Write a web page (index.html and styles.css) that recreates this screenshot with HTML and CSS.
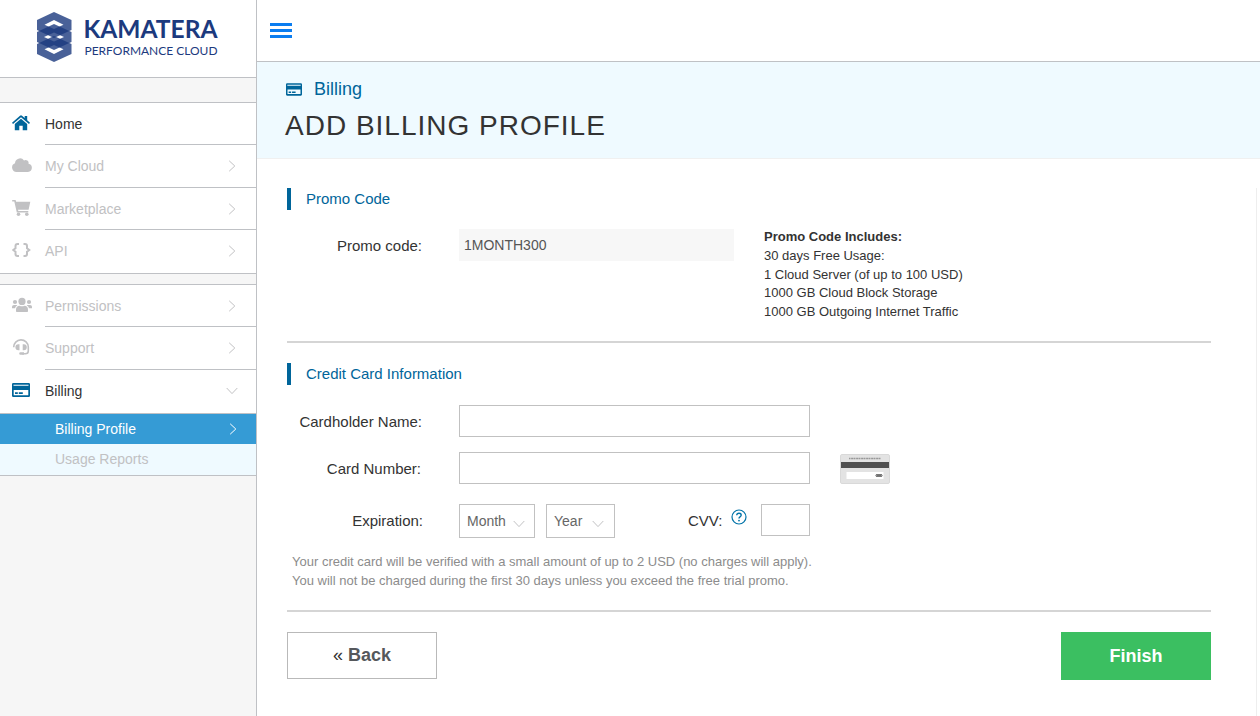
FILE: index.html
```html
<!DOCTYPE html>
<html lang="en">
<head>
    <meta charset="UTF-8">
    <meta name="viewport" content="width=device-width, initial-scale=1.0">
    <title>Kamatera - Add Billing Profile</title>
    <link rel="stylesheet" href="styles.css">
</head>
<body>
    <!-- shared icons -->
    <svg class="sprite">
        <symbol id="right" viewBox="0 0 8 12"><path d="M1.2 .8 6.8 6l-5.6 5.2" fill="none" stroke="currentColor"/></symbol>
        <symbol id="down" viewBox="0 0 12 8"><path d="M.7 1 6 6.6 11.3 1" fill="none" stroke="currentColor"/></symbol>
        <symbol id="card" viewBox="0 0 18 14">
            <path fill-rule="evenodd" fill="currentColor" d="M1.3 0h15.4A1.3 1.3 0 0 1 18 1.3v11.4a1.3 1.3 0 0 1-1.3 1.3H1.3A1.3 1.3 0 0 1 0 12.7V1.3A1.3 1.3 0 0 1 1.3 0zM1.5 1.7v1.1h15V1.7zM1.7 7v5.2h14.6V7zM3 9.3h2.8v1.7H3zM6.8 9.3h4v1.7h-4z"/>
        </symbol>
    </svg>

    <div class="app">
        <aside class="sidebar">
            <div class="logo">
                <svg width="184" height="52" viewBox="36 11 184 52">
                    <g fill="#1c3a7e" fill-opacity=".8" fill-rule="evenodd">
                        <path d="M54 12l17.5 8v10L54 38 37 30V20zM54 20l-9.5 4.7 9.5 4.3 9.5-4.3z"/>
                        <path d="M54 24l17.5 8v10L54 50 37 42V32zM54 32.5l-10 4.5 10 4.5 10-4.5z"/>
                        <path d="M54 36l17.5 8v10L54 62 37 54V44zM54 45l-9.5 4.3 9.5 4.7 9.5-4.7z"/>
                    </g>
                    <text class="logo-name" x="83.5" y="38" textLength="134" lengthAdjust="spacingAndGlyphs">KAMATERA</text>
                    <text class="logo-sub" x="84.5" y="55" textLength="133" lengthAdjust="spacingAndGlyphs">PERFORMANCE CLOUD</text>
                </svg>
            </div>

            <nav class="menu">
                <a class="item active">
                    <svg class="icon" viewBox="1 0 20 16"><path fill="currentColor" d="M9 .8a1.5 1.5 0 0 1 2 0l2.7 2.3V1h2.5v4.2L19 7.7l-1 1.2L10 2.3 2 8.9 1 7.7zM10 3.8l6.2 5.1v6.3h-4.5v-4.5H8.3v4.5H3.8V8.9z"/></svg>
                    <span class="label">Home</span>
                </a>
                <a class="item tall">
                    <svg class="icon" viewBox="0 0 20 16"><path fill="currentColor" d="M4.5 15A4.5 4.5 0 0 1 3 6.3 5 5 0 0 1 12 3.4a3 3 0 0 1 4.5 3.3A4.2 4.2 0 0 1 16 15z"/></svg>
                    <span class="label">My Cloud<svg class="right"><use href="#right"/></svg></span>
                </a>
                <a class="item">
                    <svg class="icon" viewBox="0 0 20 16"><path fill="currentColor" d="M.2 0h3.4l.5 1.7h14.2l-1.7 8H6l.3 1.3h10v1.5H4.8L2.3 1.6H.2z"/><circle cx="6.5" cy="14.2" r="1.8" fill="currentColor"/><circle cx="14.8" cy="14.2" r="1.8" fill="currentColor"/></svg>
                    <span class="label">Marketplace<svg class="right"><use href="#right"/></svg></span>
                </a>
                <a class="item last">
                    <svg class="icon" viewBox="0 0 20 16"><path fill="none" stroke="currentColor" stroke-width="2" d="M7 2H5.5Q3.5 2 3.5 4v2.2L1.2 8l2.3 1.8V12q0 2 2 2H7M11.5 2H13q2 0 2 2v2.2L17.3 8 15 9.8V12q0 2-2 2h-1.5"/></svg>
                    <span class="label">API<svg class="right"><use href="#right"/></svg></span>
                </a>
            </nav>

            <nav class="menu">
                <a class="item">
                    <svg class="icon" viewBox="0 0 20 16"><g fill="currentColor"><circle cx="10" cy="4.4" r="3.6"/><circle cx="3" cy="5" r="2.1"/><circle cx="17" cy="5" r="2.1"/><path d="M4 14.2v-1.5Q4 9 7.5 8.7q2.5 1 5 0Q16 9 16 12.7v1.5q0 .8-.8.8H4.8q-.8 0-.8-.8zM0 11v-1.2Q0 8 2 8h2.5l.8.6Q3.5 9.5 3 11.2H0zM20 11v-1.2Q20 8 18 8h-2.5l-.8.6q1.8.9 2.3 2.6h3z"/></g></svg>
                    <span class="label">Permissions<svg class="right"><use href="#right"/></svg></span>
                </a>
                <a class="item tall">
                    <svg class="icon" viewBox="0 0 20 16"><path fill="none" stroke="currentColor" stroke-width="1.6" d="M1.7 8.3A7.3 7.3 0 0 1 16.3 8v4q0 2.7-3 2.7H10"/><path fill="currentColor" d="M7.5 5.2v6H6.4a3 3 0 0 1 0-6zM10.7 5.2v6h1.1a3 3 0 0 0 0-6zM8.5 13.2H12v2.6H8.5a1.3 1.3 0 0 1 0-2.6z"/></svg>
                    <span class="label">Support<svg class="right"><use href="#right"/></svg></span>
                </a>
                <a class="item active last">
                    <svg class="icon card"><use href="#card"/></svg>
                    <span class="label">Billing<svg class="down"><use href="#down"/></svg></span>
                </a>
                <a class="sub-item selected">Billing Profile<svg class="right"><use href="#right"/></svg></a>
                <a class="sub-item">Usage Reports</a>
            </nav>
        </aside>

        <main class="main">
            <div class="topbar">
                <div class="burger"><i></i><i></i><i></i></div>
            </div>

            <header class="page-header">
                <div class="crumb"><svg preserveAspectRatio="none"><use href="#card"/></svg>Billing</div>
                <h1>ADD BILLING PROFILE</h1>
            </header>

            <div class="scroll-area">
                <form class="content">
                    <h2>Promo Code</h2>
                    <div class="row promo-row">
                        <label>Promo code:</label>
                        <div class="promo-value">1MONTH300</div>
                        <div class="promo-info">
                            <b>Promo Code Includes:</b><br>
                            30 days Free Usage:<br>
                            1 Cloud Server (of up to 100 USD)<br>
                            1000 GB Cloud Block Storage<br>
                            1000 GB Outgoing Internet Traffic
                        </div>
                    </div>
                    <hr>

                    <h2>Credit Card Information</h2>
                    <div class="row name-row">
                        <label>Cardholder Name:</label>
                        <input type="text" class="field">
                    </div>
                    <div class="row number-row">
                        <label>Card Number:</label>
                        <input type="text" class="field">
                        <svg class="card-back" width="50" height="30" viewBox="0 0 50 30">
                            <rect x=".5" y=".5" width="49" height="29" rx="1.5" fill="#e3e3e3" stroke="#d9d9d9"/>
                            <path d="M9 4.5h32" stroke="#999" stroke-width="1.4" stroke-dasharray="1.5 .6 2.5 .4"/>
                            <rect x="1" y="8" width="48" height="6" fill="#505050"/>
                            <rect x="6.5" y="18" width="37" height="7" fill="#fff"/>
                            <g fill="none" stroke="#444"><circle cx="37" cy="21.5" r="1"/><circle cx="39" cy="21.5" r="1"/><circle cx="41" cy="21.5" r="1"/></g>
                        </svg>
                    </div>
                    <div class="row exp-row">
                        <label>Expiration:</label>
                        <div class="select month">Month<svg><use href="#down"/></svg></div>
                        <div class="select year">Year<svg><use href="#down"/></svg></div>
                        <span class="cvv-label">CVV:</span>
                        <svg class="help" width="16" height="16" viewBox="0 0 16 16"><circle cx="8" cy="8" r="7" fill="none" stroke="currentColor" stroke-width="1.2"/><path d="M5.7 6.3Q5.9 4.3 8 4.3t2.2 1.8Q10.2 7.2 9 7.9 8 8.5 8 9.6" fill="none" stroke="currentColor" stroke-width="1.4"/><circle cx="8" cy="11.6" r=".9" fill="currentColor"/></svg>
                        <input type="text" class="field cvv">
                    </div>
                    <p class="note">
                        Your credit card will be verified with a small amount of up to 2 USD (no charges will apply).<br>
                        You will not be charged during the first 30 days unless you exceed the free trial promo.
                    </p>
                    <hr>

                    <div class="buttons">
                        <button type="button" class="back"><span>«</span> Back</button>
                        <button type="button" class="finish">Finish</button>
                    </div>
                </form>
            </div>
        </main>
    </div>
</body>
</html>
```
FILE: styles.css
```css
:root {
    --blue: #00659a;
    --line: #bfc1c5;
    --text: #333;
    --muted: #c1c1c3;
    --pale: #effaff;
}

* {
    box-sizing: border-box;
}

body {
    margin: 0;
    font-family: "Liberation Sans", Arial, sans-serif;
    color: var(--text);
    background: #fff;
    overflow: hidden;
}

.sprite {
    display: none;
}

.app {
    display: flex;
    height: 716px;
}

/* Sidebar */
.sidebar {
    width: 257px;
    flex-shrink: 0;
    background: #f6f6f6;
    border-right: 1px solid var(--line);
}

.logo {
    height: 78px;
    padding: 11px 0 0 36px;
    background: #fff;
    border-bottom: 1px solid var(--line);
    margin-bottom: 24px;
}

.logo svg {
    display: block;
    overflow: visible;
}

.logo-name {
    font: 700 25.5px Lato, sans-serif;
    fill: #1c3a7e;
}

.logo-sub {
    font: 400 12px Lato, sans-serif;
    fill: #1c3a7e;
}

.menu {
    background: #fff;
    border-top: 1px solid var(--line);
    border-bottom: 1px solid var(--line);
    margin-bottom: 10px;
    font-size: 14px;
}

.item {
    display: flex;
    align-items: flex-start;
    height: 42px;
    padding-left: 12px;
    color: var(--muted);
}

.item.tall,
.item.last {
    height: 43px;
}

.icon {
    width: 20px;
    height: 16px;
    margin: 12px 13px 0 0;
    flex-shrink: 0;
}

.icon.card {
    width: 18px;
    height: 14px;
    margin: 13px 15px 0 0;
}

.label {
    flex: 1;
    display: flex;
    justify-content: space-between;
    align-self: stretch;
    line-height: 42px;
    border-bottom: 1px solid var(--line);
    color: var(--muted);
}

.last .label {
    border-bottom: none;
}

.active {
    color: var(--blue);
}

.active .label {
    color: var(--text);
}

.right {
    width: 8px;
    height: 12px;
    margin: 15px 20px 0 0;
}

.label .down {
    width: 12px;
    height: 8px;
    margin: 17px 18px 0 0;
    color: var(--muted);
}

.sub-item {
    display: flex;
    justify-content: space-between;
    height: 31px;
    padding-left: 55px;
    line-height: 30px;
    background: var(--pale);
    color: var(--muted);
}

.sub-item.selected {
    background: #359bd5;
    border-top: 1px solid var(--line);
    color: #fff;
}

.sub-item .right {
    margin: 9px 19px 0 0;
}

/* Main column */
.main {
    flex: 1;
    display: flex;
    flex-direction: column;
}

.topbar {
    height: 62px;
    padding: 23px 13px;
    border-bottom: 1px solid var(--line);
}

.burger {
    display: flex;
    flex-direction: column;
    gap: 3px;
    width: 22px;
}

.burger i {
    height: 3px;
    background: #0b7df0;
}

.page-header {
    height: 97px;
    padding: 15px 28px 0;
    background: var(--pale);
    border-bottom: 1px solid #f0f0f0;
}

.crumb {
    display: flex;
    align-items: center;
    gap: 12px;
    height: 24px;
    padding-left: 1px;
    font-size: 18px;
    color: var(--blue);
}

.crumb svg {
    width: 16px;
    height: 13px;
}

h1 {
    margin: 8px 0 0;
    font-size: 28px;
    line-height: 34px;
    font-weight: normal;
    letter-spacing: 1px;
}

.scroll-area {
    flex: 1;
    margin: 29px 3px 0 0;
    border-right: 1px solid #eee;
}

.content {
    width: 954px;
    padding-left: 30px;
}

h2 {
    margin: 0;
    height: 22px;
    padding-left: 15px;
    border-left: 4px solid var(--blue);
    font-size: 15px;
    line-height: 22px;
    font-weight: normal;
    color: var(--blue);
}

hr {
    height: 2px;
    margin: 0;
    border: none;
    background: #d5d5d5;
}

.row {
    display: flex;
    align-items: flex-start;
}

.row label {
    width: 135px;
    margin-right: 37px;
    text-align: right;
    font-size: 15px;
    line-height: 34px;
}

.promo-row {
    height: 112px;
    margin-top: 19px;
}

.promo-value {
    width: 275px;
    height: 32px;
    margin-right: 30px;
    padding-left: 5px;
    background: #f7f7f7;
    font-size: 14px;
    line-height: 32px;
    color: #555;
}

.promo-info {
    margin-top: -1px;
    font-size: 13px;
    line-height: 18.75px;
}

hr + h2 {
    margin-top: 20px;
}

.field {
    width: 351px;
    height: 32px;
    padding: 0 8px;
    border: 1px solid #c1c1c1;
    background: #fff;
}

.name-row {
    margin-top: 20px;
    height: 47px;
}

.number-row {
    height: 52px;
}

.number-row label {
    width: 134px;
    margin-right: 38px;
}

.card-back {
    margin: 2px 0 0 30px;
}

.exp-row {
    height: 48px;
}

.exp-row label {
    width: 136px;
    margin-right: 36px;
}

.select {
    display: flex;
    justify-content: space-between;
    height: 34px;
    padding: 0 9px 0 7px;
    border: 1px solid #c1c1c1;
    font-size: 14px;
    line-height: 32px;
    color: #666;
}

.select svg {
    width: 12px;
    height: 8px;
    margin-top: 15px;
    color: var(--muted);
}

.month {
    width: 76px;
}

.year {
    width: 69px;
    margin-left: 11px;
    padding-right: 10px;
}

.cvv-label {
    width: 43px;
    margin-left: 73px;
    font-size: 15px;
    line-height: 34px;
}

.help {
    margin-top: 5px;
    color: #0073a8;
}

.cvv {
    width: 49px;
    margin-left: 14px;
}

.note {
    margin: 0;
    height: 58px;
    padding-left: 5px;
    font-size: 13px;
    line-height: 19px;
    color: #8c8c8c;
}

.buttons {
    display: flex;
    justify-content: space-between;
    margin-top: 20px;
}

.buttons button {
    width: 150px;
    height: 48px;
    border: none;
    font: bold 18px "Liberation Sans", Arial, sans-serif;
}

.buttons .back {
    height: 47px;
    padding-bottom: 2px;
    background: #fff;
    border: 1px solid #b9b9b9;
    color: #55585c;
}

.back span {
    font-weight: normal;
    color: var(--text);
}

.buttons .finish {
    background: #3bbf61;
    color: #fff;
}
```
